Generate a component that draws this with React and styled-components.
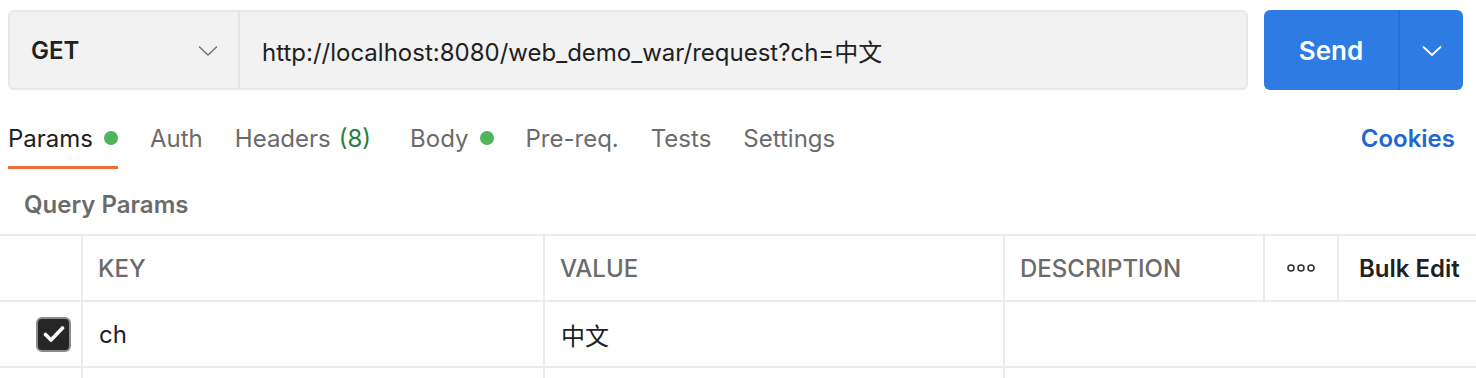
import React from "react";
import styled, { createGlobalStyle } from "styled-components";

const GlobalStyle = createGlobalStyle`
  html, body {
    margin: 0;
    padding: 0;
    background: #ffffff;
  }
  body {
    font-family: Inter, "Noto Sans CJK SC", sans-serif;
    color: #212121;
    -webkit-font-smoothing: antialiased;
  }
`;

function Chevron({ color, width = 1.6 }) {
  return (
    <svg width="20" height="12" viewBox="0 0 20 12" fill="none">
      <path d="M1.5 2 L10 10 L18.5 2" stroke={color} strokeWidth={width} strokeLinecap="round" strokeLinejoin="round" />
    </svg>
  );
}

function Dots() {
  return (
    <svg width="28" height="8" viewBox="0 0 28 8" fill="none">
      <circle cx="4" cy="4" r="3" stroke="#333" strokeWidth="1.6" />
      <circle cx="14" cy="4" r="3" stroke="#333" strokeWidth="1.6" />
      <circle cx="24" cy="4" r="3" stroke="#333" strokeWidth="1.6" />
    </svg>
  );
}

function CheckBox() {
  return (
    <Check>
      <svg width="22" height="18" viewBox="0 0 22 18" fill="none">
        <path d="M2.5 9.5 L8 15 L19.5 3" stroke="#fff" strokeWidth="3.6" strokeLinecap="round" strokeLinejoin="round" />
      </svg>
    </Check>
  );
}

const tabs = [
  { label: "Params", dot: true, active: true },
  { label: "Auth" },
  { label: "Headers", count: "(8)" },
  { label: "Body", dot: true },
  { label: "Pre-req." },
  { label: "Tests" },
  { label: "Settings" },
];

export default function App() {
  return (
    <Page>
      <GlobalStyle />
      <TopBar>
        <UrlBox>
          <Method>
            <MethodText>GET</MethodText>
            <Chevron color="#707070" width={1.4} />
          </Method>
          <UrlText>http://localhost:8080/web_demo_war/request?ch=中文</UrlText>
        </UrlBox>
        <SendGroup>
          <SendMain>Send</SendMain>
          <SendArrow>
            <Chevron color="#ffffff" width={1.8} />
          </SendArrow>
        </SendGroup>
      </TopBar>

      <TabBar>
        <TabList>
          {tabs.map((t) => (
            <Tab key={t.label} $active={t.active} $extra={t.count ? 7 : 0}>
              {t.label}
              {t.count && <Count>{t.count}</Count>}
              {t.dot && <Dot />}
            </Tab>
          ))}
        </TabList>
        <Cookies>Cookies</Cookies>
      </TabBar>

      <SectionTitle>Query Params</SectionTitle>

      <Table>
        <HeadCell $first />
        <HeadCell>KEY</HeadCell>
        <HeadCell>VALUE</HeadCell>
        <HeadCell>DESCRIPTION</HeadCell>
        <HeadCell $center>
          <Dots />
        </HeadCell>
        <HeadCell $dark>Bulk Edit</HeadCell>

        <CheckCell>
          <CheckBox />
        </CheckCell>
        <Cell>ch</Cell>
        <Cell>中文</Cell>
        <Cell $span={3} />

        <CheckCell />
        <Cell />
        <Cell />
        <Cell $span={3} />
      </Table>
    </Page>
  );
}

const Page = styled.div`
  width: 1476px;
  height: 378px;
  overflow: hidden;
`;

const TopBar = styled.div`
  display: flex;
  gap: 16px;
  padding: 10px 13px 0 8px;
  height: 80px;
  box-sizing: content-box;
`;

const UrlBox = styled.div`
  flex: 1;
  display: flex;
  background: #f2f2f2;
  border: 2px solid #e8e8e8;
  border-radius: 6px;
  box-sizing: border-box;
  height: 80px;
`;

const Method = styled.div`
  width: 230px;
  display: flex;
  align-items: center;
  justify-content: space-between;
  padding: 1px 20px 0 21px;
  box-sizing: border-box;
  border-right: 2px solid #e6e6e6;
`;

const MethodText = styled.span`
  font-size: 24px;
  font-weight: 600;
  color: #212121;
`;

const UrlText = styled.div`
  display: flex;
  align-items: center;
  padding: 1px 0 0 22px;
  font-size: 24px;
  color: #212121;
  font-family: Inter, "Noto Sans CJK SC", sans-serif;
`;

const SendGroup = styled.div`
  width: 199px;
  height: 80px;
  display: flex;
  background: #2f7be4;
  border-radius: 6px;
  overflow: hidden;
  color: #ffffff;
`;

const SendMain = styled.div`
  width: 134px;
  display: flex;
  align-items: center;
  justify-content: center;
  font-size: 26px;
  font-weight: 600;
  border-right: 2px solid #2a6fd2;
`;

const SendArrow = styled.div`
  flex: 1;
  display: flex;
  align-items: center;
  justify-content: center;
  padding-top: 1px;
`;

const TabBar = styled.div`
  display: flex;
  justify-content: space-between;
  align-items: flex-start;
  margin-top: 20px;
  padding: 0 21px 0 8px;
`;

const TabList = styled.div`
  display: flex;
  gap: 32px;
`;

const Tab = styled.div`
  height: 59px;
  box-sizing: border-box;
  display: flex;
  align-items: center;
  padding-right: ${(p) => p.$extra}px;
  font-size: 24px;
  color: ${(p) => (p.$active ? "#212121" : "#6b6b6b")};
  border-bottom: 3px solid ${(p) => (p.$active ? "#ef6d3b" : "transparent")};
`;

const Count = styled.span`
  color: #2b7d3c;
  margin-left: 8px;
`;

const Dot = styled.span`
  width: 14px;
  height: 14px;
  border-radius: 50%;
  background: #4fb55c;
  margin-left: 11px;
`;

const Cookies = styled.div`
  height: 56px;
  display: flex;
  align-items: center;
  font-size: 24px;
  font-weight: 600;
  color: #2366d1;
`;

const SectionTitle = styled.div`
  height: 65px;
  padding: 5px 0 0 24px;
  box-sizing: border-box;
  display: flex;
  align-items: center;
  font-size: 24px;
  font-weight: 600;
  color: #6b6b6b;
`;

const Table = styled.div`
  display: grid;
  grid-template-columns: 81px 462px 460px 260px 74px 1fr;
  grid-auto-rows: 66px;
  border-top: 2px solid #ececec;
`;

const HeadCell = styled.div`
  display: flex;
  align-items: center;
  justify-content: ${(p) => (p.$center ? "center" : "flex-start")};
  padding-left: ${(p) => (p.$center ? 0 : p.$dark ? 20 : 15)}px;
  box-sizing: border-box;
  border-bottom: 2px solid #ececec;
  border-left: ${(p) => (p.$first ? "none" : "2px solid #ececec")};
  font-size: 24px;
  font-weight: ${(p) => (p.$dark ? 600 : 500)};
  color: ${(p) => (p.$dark ? "#212121" : "#6b6b6b")};
`;

const Cell = styled.div`
  grid-column: span ${(p) => p.$span || 1};
  display: flex;
  align-items: center;
  padding-left: 16px;
  box-sizing: border-box;
  border-bottom: 2px solid #ececec;
  border-left: 2px solid #ececec;
  font-size: 24px;
  color: #212121;
`;

const CheckCell = styled.div`
  display: flex;
  align-items: center;
  justify-content: flex-end;
  padding-right: 10px;
  box-sizing: border-box;
  border-bottom: 2px solid #ececec;
`;

const Check = styled.div`
  width: 35px;
  height: 35px;
  box-sizing: border-box;
  border-radius: 6px;
  background: #262626;
  border: 2px solid #8c8c8c;
  display: flex;
  align-items: center;
  justify-content: center;
`;
